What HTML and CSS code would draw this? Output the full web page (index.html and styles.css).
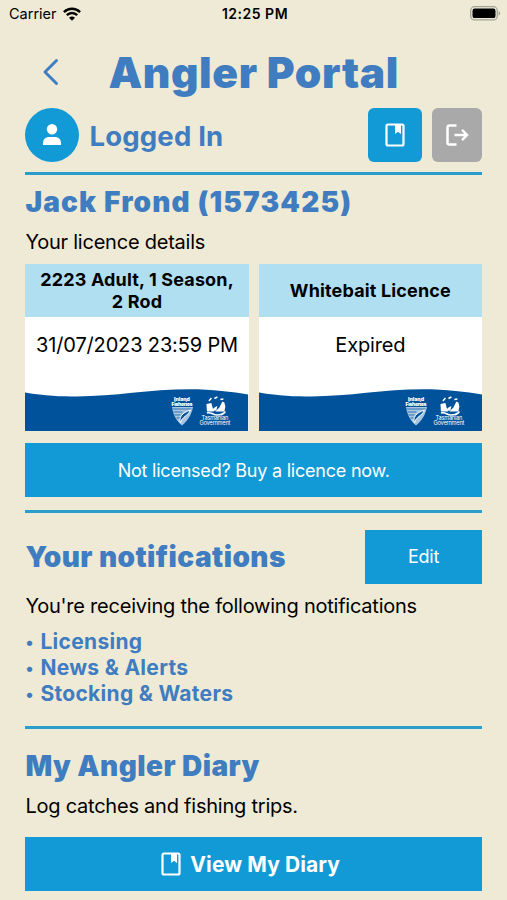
FILE: index.html
```html
<!DOCTYPE html>
<html lang="en">
<head>
    <meta charset="UTF-8">
    <meta name="viewport" content="width=device-width, initial-scale=1.0">
    <title>Angler Portal</title>
    <link rel="stylesheet" href="styles.css">
</head>
<body>

<!-- Shared artwork -->
<svg class="defs" width="0" height="0">
    <symbol id="book" viewBox="0 0 20 24">
        <rect x="1.5" y="1.5" width="17" height="21" rx="1.5" fill="none" stroke="#fff" stroke-width="2.2"/>
        <path d="M10 1h6v10l-3-2.2-3 2.2z" fill="#fff"/>
    </symbol>
    <symbol id="card-art" viewBox="0 0 224 44">
        <path d="M0 5.5C20 9 36 9.500 52 9.500C90 9.500 125 2.300 165 2.300C188 2.300 208 5 224 7.500V44H0z" fill="#00529b"/>
        <!-- fish shield -->
        <path d="M147.500 20H168.500C167 28 163 34 157.500 38.500C152 34 148.500 28 147.500 20z" fill="#a9c6e0"/>
        <path d="M148 22h19M149 25h9M150 28h6M152 31h4" stroke="#00529b" stroke-width=".7"/>
        <path d="M156 36C154 31 157 26 166 23C165 27 160 29 157 33z" fill="#00529b" stroke="#fff" stroke-width="1"/>
        <!-- government crest -->
        <path d="M182 17l5-1 1 4 1.500 4.500h-7z" fill="#fff"/>
        <path d="M191 24.500l4-4 3-6 2 1 1 4-1 5z" fill="#fff"/>
        <path d="M188 24c0-2 2-4 5-5l-1 4.500z" fill="#fff"/>
        <path d="M184.500 14l2.500-3M190 11.500l3-1.500M196 12.500l3-.5" stroke="#fff" stroke-width="1.500"/>
        <path d="M182.500 26c4-1.500 6 2 10 2s7-1 8.500-3.500" fill="none" stroke="#fff" stroke-width="1.500"/>
    </symbol>
</svg>

<div class="status-bar">
    <div class="carrier">
        Carrier
        <svg width="18" height="14" viewBox="0 0 18 14">
            <g fill="none" stroke="#000" stroke-width="2.4">
                <path d="M.9 5.100C5.500.6 12.500.6 17.100 5.100"/>
                <path d="M3.800 8.200C6.800 5.300 11.200 5.300 14.200 8.200"/>
            </g>
            <path d="M6 10.700C7.700 9.100 10.300 9.100 12 10.700L9 13.800z"/>
        </svg>
    </div>
    <div class="clock">12:25 PM</div>
    <svg class="battery" width="31" height="15" viewBox="0 0 31 15">
        <rect x=".7" y=".7" width="26.6" height="13.2" rx="4" fill="none" stroke="#a5a397" stroke-width="1.3"/>
        <rect x="2.5" y="2.5" width="23" height="9.6" rx="2.2"/>
        <path d="M28.600 5c2 .8 2 3.800 0 4.600z" fill="#a5a397"/>
    </svg>
</div>

<div class="page">
    <header class="title-bar">
        <svg class="back" width="18" height="28" viewBox="0 0 18 28">
            <path d="M15.500 2.500L4 14l11.500 11.500" fill="none" stroke="#407cc0" stroke-width="2.9" stroke-linecap="round" stroke-linejoin="round"/>
        </svg>
        <h1>Angler Portal</h1>
    </header>

    <div class="profile">
        <div class="avatar">
            <svg width="18" height="22" viewBox="0 0 18 22">
                <circle cx="9" cy="5.3" r="5.2" fill="#fff"/>
                <path d="M0 21v-2c0-4 3-6 6-6h6c3 0 6 2 6 6v2z" fill="#fff"/>
            </svg>
        </div>
        <div class="logged-in">Logged In</div>
        <button class="icon-button"><svg width="20" height="24"><use href="#book"/></svg></button>
        <button class="icon-button logout">
            <svg width="24" height="24" viewBox="0 0 24 24">
                <path d="M11.500 2.500H4.500Q2.500 2.500 2.500 4.500V19.500Q2.500 21.500 4.500 21.500H11.500M9.500 12H21.500M17 6.800L22 12L17 17.200" fill="none" stroke="#fff" stroke-width="2.5"/>
            </svg>
        </button>
    </div>

    <section class="licences">
        <h2 class="name">Jack Frond (1573425)</h2>
        <p>Your licence details</p>
        <div class="cards">
            <div class="card">
                <div class="card-title">2223 Adult, 1 Season,<br>2 Rod</div>
                <div class="card-value">31/07/2023 23:59 PM</div>
                <svg class="card-footer" viewBox="0 0 224 44">
                    <use href="#card-art"/>
                    <text class="fisheries" x="157.5" y="13.5" textLength="16">Inland</text>
                    <text class="fisheries" x="157.5" y="18.5" textLength="21">Fisheries</text>
                    <text class="government" x="190.5" y="33" textLength="27">Tasmanian</text>
                    <text class="government" x="190.5" y="38.5" textLength="31">Government</text>
                </svg>
            </div>
            <div class="card">
                <div class="card-title">Whitebait Licence</div>
                <div class="card-value">Expired</div>
                <svg class="card-footer" viewBox="0 0 224 44">
                    <use href="#card-art"/>
                    <text class="fisheries" x="157.5" y="13.5" textLength="16">Inland</text>
                    <text class="fisheries" x="157.5" y="18.5" textLength="21">Fisheries</text>
                    <text class="government" x="190.5" y="33" textLength="27">Tasmanian</text>
                    <text class="government" x="190.5" y="38.5" textLength="31">Government</text>
                </svg>
            </div>
        </div>
        <button class="button buy">Not licensed? Buy a licence now.</button>
    </section>

    <section class="notifications">
        <div class="section-head">
            <h2>Your notifications</h2>
            <button class="button edit">Edit</button>
        </div>
        <p>You're receiving the following notifications</p>
        <ul>
            <li>Licensing</li>
            <li>News &amp; Alerts</li>
            <li>Stocking &amp; Waters</li>
        </ul>
    </section>

    <section class="diary">
        <h2>My Angler Diary</h2>
        <p>Log catches and fishing trips.</p>
        <button class="button view">
            <svg width="20" height="24"><use href="#book"/></svg>
            View My Diary
        </button>
    </section>
</div>

</body>
</html>
```

FILE: styles.css
```css
* {
    box-sizing: border-box;
}

body {
    margin: 0;
    height: 900px;
    overflow: hidden;
    background-color: #eeead6;
    color: #000;
    font-family: Inter, "Liberation Sans", sans-serif;
}

.defs {
    display: block;
}

h1, h2, p, ul {
    margin: 0;
    padding: 0;
}

button {
    border: 0;
    padding: 0;
    font-family: inherit;
}

.status-bar {
    display: grid;
    grid-template-columns: 1fr auto 1fr;
    align-items: center;
    height: 27px;
    padding: 0 6px 0 9px;
    font-size: 14.5px;
}

.carrier {
    display: flex;
    align-items: center;
    gap: 6px;
}

.clock {
    font-size: 14px;
    font-weight: 600;
    letter-spacing: 0.5px;
}

.battery {
    justify-self: end;
}

.page {
    padding: 18px 25px 0 25.4px;
}

.title-bar {
    display: flex;
    align-items: center;
    height: 54px;
    padding-left: 16px;
}

h1 {
    margin-left: 49px;
    color: #407cc0;
    font-size: 42.5px;
    font-weight: 900;
    letter-spacing: 0.6px;
    white-space: nowrap;
}

h2 {
    color: #407cc0;
    font-size: 28px;
    font-weight: 900;
    letter-spacing: 0.45px;
    line-height: 34px;
    white-space: nowrap;
}

p {
    font-size: 20px;
    letter-spacing: -0.23px;
    line-height: 26px;
    white-space: nowrap;
}

.profile {
    display: flex;
    align-items: center;
    height: 54px;
    margin-top: 9px;
}

.avatar {
    display: flex;
    align-items: center;
    justify-content: center;
    width: 54px;
    height: 54px;
    border-radius: 50%;
    background-color: #129ad6;
}

.logged-in {
    flex: 1;
    margin-left: 10px;
    padding-top: 1px;
    color: #407cc0;
    font-size: 27.5px;
    font-weight: 700;
    letter-spacing: 0.2px;
}

.icon-button {
    display: flex;
    align-items: center;
    justify-content: center;
    width: 54px;
    height: 54px;
    border-radius: 6px;
    background-color: #129ad6;
}

.icon-button.logout {
    width: 50px;
    margin-left: 10px;
    background-color: #a9a9a9;
}

section {
    border-top: 3px solid #2b9dcb;
}

.licences {
    height: 338px;
    margin-top: 10px;
    padding-top: 10px;
}

.name {
    letter-spacing: 1.15px;
}

.licences p {
    margin-top: 10px;
}

.cards {
    display: grid;
    grid-template-columns: 1fr 1fr;
    gap: 10px;
    margin-top: 9px;
}

.card {
    display: flex;
    flex-direction: column;
    height: 167px;
    background-color: #fff;
    text-align: center;
}

.card-title {
    display: flex;
    align-items: center;
    justify-content: center;
    height: 53px;
    background-color: #b1dff2;
    font-size: 18px;
    font-weight: 700;
    letter-spacing: 0.15px;
    line-height: 21.5px;
}

.card-value {
    flex: 1;
    padding-top: 15px;
    font-size: 20px;
    letter-spacing: -0.15px;
    line-height: 26px;
    white-space: nowrap;
}

.card-footer {
    display: block;
    width: 100%;
    height: 44px;
    fill: #fff;
    text-anchor: middle;
}

.fisheries {
    font-size: 5.2px;
    font-weight: 900;
}

.government {
    font-size: 5.6px;
}

.button {
    display: flex;
    align-items: center;
    justify-content: center;
    width: 100%;
    height: 54px;
    background-color: #129ad6;
    color: #fff;
    font-size: 18px;
    letter-spacing: -0.22px;
}

.buy {
    margin-top: 12px;
}

.notifications {
    height: 216px;
    padding-top: 16.5px;
}

.section-head {
    display: flex;
    align-items: center;
    justify-content: space-between;
}

.edit {
    width: 117px;
}

.notifications p {
    margin-top: 9.5px;
}

ul {
    margin-top: 10px;
    list-style: none;
    color: #407cc0;
    font-size: 21px;
    font-weight: 700;
    letter-spacing: 0.3px;
    line-height: 26px;
}

li {
    display: flex;
}

li::before {
    content: "•";
    width: 15px;
    font-size: 17px;
}

.diary {
    padding-top: 20px;
}

.diary p {
    margin-top: 10px;
}

.view {
    gap: 9px;
    margin-top: 18px;
    padding-right: 6px;
    font-size: 21px;
    font-weight: 700;
    letter-spacing: 0.1px;
}
```
